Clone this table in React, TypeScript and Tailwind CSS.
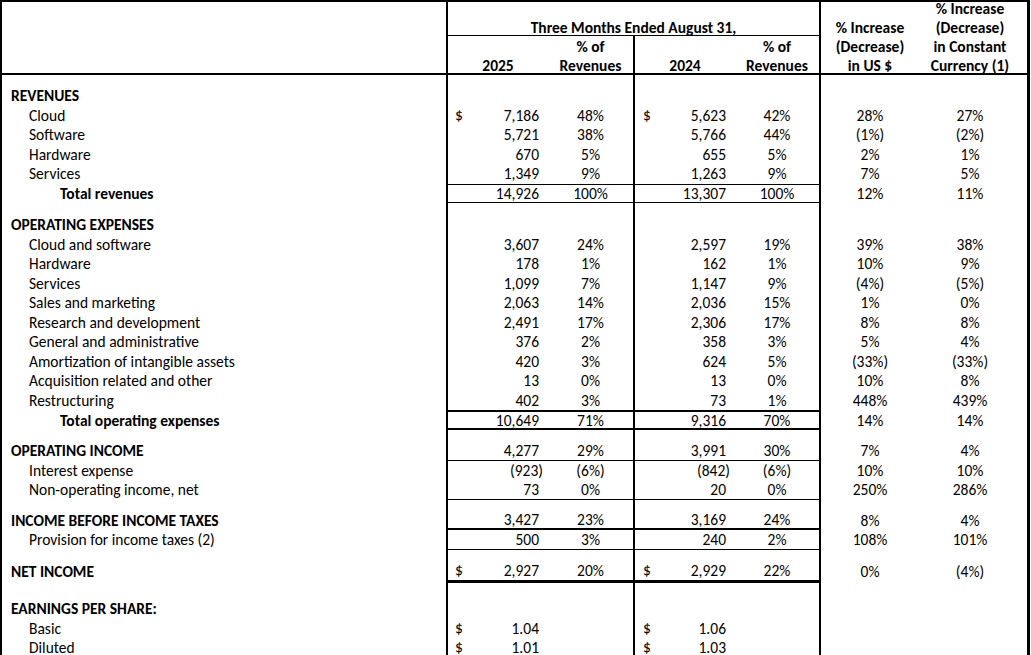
type Row = {
  label?: string
  kind?: 'section' | 'item' | 'total'
  d25?: boolean
  v25?: string
  p25?: string
  d24?: boolean
  v24?: string
  p24?: string
  us?: string
  cc?: string
  line?: string
  h?: string
}

const grid = 'grid grid-cols-[446px_100px_87px_100px_86px_98px_111px]'

const rows: Row[] = [
  { h: 'h-[11px]' },
  { label: 'REVENUES', kind: 'section' },
  { label: 'Cloud', d25: true, v25: '7,186', p25: '48%', d24: true, v24: '5,623', p24: '42%', us: '28%', cc: '27%' },
  { label: 'Software', v25: '5,721', p25: '38%', v24: '5,766', p24: '44%', us: '(1%)', cc: '(2%)' },
  { label: 'Hardware', v25: '670', p25: '5%', v24: '655', p24: '5%', us: '2%', cc: '1%' },
  { label: 'Services', v25: '1,349', p25: '9%', v24: '1,263', p24: '9%', us: '7%', cc: '5%' },
  { label: 'Total revenues', kind: 'total', v25: '14,926', p25: '100%', v24: '13,307', p24: '100%', us: '12%', cc: '11%', line: 'border-t border-b' },
  { h: 'h-[12px]' },
  { label: 'OPERATING EXPENSES', kind: 'section' },
  { label: 'Cloud and software', v25: '3,607', p25: '24%', v24: '2,597', p24: '19%', us: '39%', cc: '38%' },
  { label: 'Hardware', v25: '178', p25: '1%', v24: '162', p24: '1%', us: '10%', cc: '9%' },
  { label: 'Services', v25: '1,099', p25: '7%', v24: '1,147', p24: '9%', us: '(4%)', cc: '(5%)' },
  { label: 'Sales and marketing', v25: '2,063', p25: '14%', v24: '2,036', p24: '15%', us: '1%', cc: '0%' },
  { label: 'Research and development', v25: '2,491', p25: '17%', v24: '2,306', p24: '17%', us: '8%', cc: '8%' },
  { label: 'General and administrative', v25: '376', p25: '2%', v24: '358', p24: '3%', us: '5%', cc: '4%' },
  { label: 'Amortization of intangible assets', v25: '420', p25: '3%', v24: '624', p24: '5%', us: '(33%)', cc: '(33%)' },
  { label: 'Acquisition related and other', v25: '13', p25: '0%', v24: '13', p24: '0%', us: '10%', cc: '8%' },
  { label: 'Restructuring', v25: '402', p25: '3%', v24: '73', p24: '1%', us: '448%', cc: '439%' },
  { label: 'Total operating expenses', kind: 'total', v25: '10,649', p25: '71%', v24: '9,316', p24: '70%', us: '14%', cc: '14%', line: 'border-t-2 border-b-2', h: 'h-[20px]' },
  { h: 'h-[11px]' },
  { label: 'OPERATING INCOME', kind: 'section', v25: '4,277', p25: '29%', v24: '3,991', p24: '30%', us: '7%', cc: '4%', line: 'border-b' },
  { label: 'Interest expense', v25: '(923)', p25: '(6%)', v24: '(842)', p24: '(6%)', us: '10%', cc: '10%' },
  { label: 'Non-operating income, net', v25: '73', p25: '0%', v24: '20', p24: '0%', us: '250%', cc: '286%', line: 'border-b' },
  { h: 'h-[11px]' },
  { label: 'INCOME BEFORE INCOME TAXES', kind: 'section', v25: '3,427', p25: '23%', v24: '3,169', p24: '24%', us: '8%', cc: '4%', line: 'border-b-2' },
  { label: 'Provision for income taxes (2)', v25: '500', p25: '3%', v24: '240', p24: '2%', us: '108%', cc: '101%', line: 'border-b' },
  { h: 'h-[11px]' },
  { label: 'NET INCOME', kind: 'section', d25: true, v25: '2,927', p25: '20%', d24: true, v24: '2,929', p24: '22%', us: '0%', cc: '(4%)', line: 'border-b-[3px]', h: 'h-[22.5px]' },
  { h: 'h-[16px]' },
  { label: 'EARNINGS PER SHARE:', kind: 'section' },
  { label: 'Basic', d25: true, v25: '1.04', d24: true, v24: '1.06' },
  { label: 'Diluted', d25: true, v25: '1.01', d24: true, v24: '1.03' },
]

function Value({ v, dollar, line, left }: { v?: string; dollar?: boolean; line: string; left: string }) {
  const neg = v?.startsWith('(')
  return (
    <div className={`flex items-center justify-between border-black pt-px ${line} ${left} ${neg ? 'pr-[5px]' : 'pr-[9px]'}`}>
      <span>{dollar ? '$' : ''}</span>
      <span>{v}</span>
    </div>
  )
}

function Line({ r }: { r: Row }) {
  const line = r.line ?? ''
  const pad =
    r.kind === 'section' ? 'pl-[9px] font-bold' : r.kind === 'total' ? 'pl-[58px] font-bold' : 'pl-[27px]'
  return (
    <div className={`${grid} ${r.h ?? 'h-[19.5px]'} leading-[14px]`}>
      <div className={`flex items-center border-r-2 border-black pt-px ${pad}`}>{r.label}</div>
      <Value v={r.v25} dollar={r.d25} line={line} left="pl-[7px]" />
      <div className={`flex items-center justify-center border-r-2 border-black pt-px ${line}`}>{r.p25}</div>
      <Value v={r.v24} dollar={r.d24} line={line} left="pl-[8px]" />
      <div className={`flex items-center justify-center border-r-2 border-black pt-px ${line}`}>{r.p24}</div>
      <div className="flex items-center justify-center pt-px">{r.us}</div>
      <div className="flex items-center justify-center border-r-[3px] border-black pr-[6px] pt-px">{r.cc}</div>
    </div>
  )
}

export default function App() {
  return (
    <div className="h-[655px] w-[1031px] overflow-hidden bg-white">
      <div
        className="w-[1030px] border-l-2 border-t-2 border-black text-[15.5px] text-black"
        style={{ fontFamily: 'Carlito, Lato, "Liberation Sans", sans-serif' }}
      >
        <div className={`${grid} grid-rows-[34px_39px] font-bold leading-[19px]`}>
          <div className="row-span-2 border-r-2 border-b-2 border-black" />
          <div className="col-span-4 flex items-end justify-center border-r-2 border-b border-black">
            <span className="-mb-[2px]">Three Months Ended August 31,</span>
          </div>
          <div className="row-span-2 flex flex-col items-center justify-end border-b-2 border-black">
            <span>% Increase</span>
            <span>(Decrease)</span>
            <span className="-mb-[2px]">in US $</span>
          </div>
          <div className="row-span-2 flex flex-col items-center justify-end border-r-[3px] border-b-2 border-black pr-[6px]">
            <span>% Increase</span>
            <span>(Decrease)</span>
            <span>in Constant</span>
            <span className="-mb-[2px]">Currency (1)</span>
          </div>
          <div className="flex items-end justify-center border-b-2 border-black">
            <span className="-mb-[2px]">2025</span>
          </div>
          <div className="flex flex-col items-center justify-end border-r-2 border-b-2 border-black">
            <span>% of</span>
            <span className="-mb-[2px]">Revenues</span>
          </div>
          <div className="flex items-end justify-center border-b-2 border-black">
            <span className="-mb-[2px]">2024</span>
          </div>
          <div className="flex flex-col items-center justify-end border-r-2 border-b-2 border-black">
            <span>% of</span>
            <span className="-mb-[2px]">Revenues</span>
          </div>
        </div>
        {rows.map((r, i) => (
          <Line key={i} r={r} />
        ))}
      </div>
    </div>
  )
}
